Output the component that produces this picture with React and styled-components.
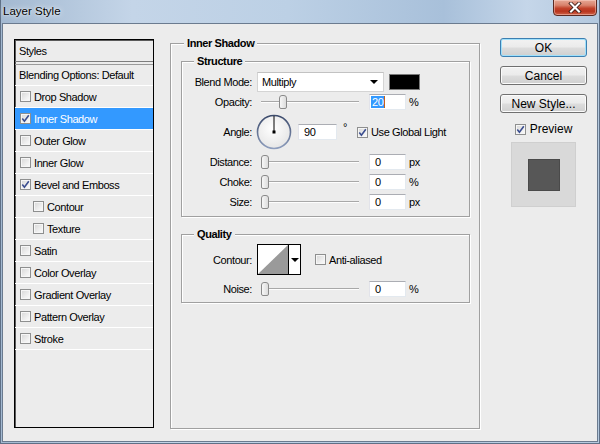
import React from 'react';
import styled, {createGlobalStyle, css} from 'styled-components';

const GlobalStyle = createGlobalStyle`
  html, body {
    margin: 0;
    padding: 0;
    overflow: hidden;
    background: #b9cce1;
  }
  body {
    font-family: "Liberation Sans", Arial, sans-serif;
  }
`;

const layerItems = [
  {label: 'Drop Shadow'},
  {label: 'Inner Shadow', checked: true, selected: true},
  {label: 'Outer Glow'},
  {label: 'Inner Glow'},
  {label: 'Bevel and Emboss', checked: true},
  {label: 'Contour', indent: true},
  {label: 'Texture', indent: true},
  {label: 'Satin'},
  {label: 'Color Overlay'},
  {label: 'Gradient Overlay'},
  {label: 'Pattern Overlay'},
  {label: 'Stroke'},
];

const sliderRows = [
  {label: 'Distance:', value: 0, unit: 'px'},
  {label: 'Choke:', value: 0, unit: '%'},
  {label: 'Size:', value: 0, unit: 'px'},
];

function CheckBox({checked}) {
  return (
    <Check>
      {checked && (
        <svg width="9" height="9" viewBox="0 0 9 9">
          <path d="M1.3 4.6 L3.4 7.2 L7.8 1.2" fill="none" stroke="#3a4d8f" strokeWidth="1.6" />
        </svg>
      )}
    </Check>
  );
}

function Slider({value}) {
  return (
    <Track>
      <Thumb style={{left: 4 + (value / 100) * 90}} />
    </Track>
  );
}

function Dial() {
  return (
    <DialBox>
      <svg width="36" height="36" viewBox="0 0 36 36">
        <defs>
          <linearGradient id="ring" x1="0" y1="0" x2="0" y2="1">
            <stop offset="0" stopColor="#3b4a6b" />
            <stop offset="1" stopColor="#8d9dbd" />
          </linearGradient>
          <radialGradient id="face" cx="0.45" cy="0.4" r="0.6">
            <stop offset="0" stopColor="#ffffff" />
            <stop offset="1" stopColor="#e6e6e6" />
          </radialGradient>
        </defs>
        <circle cx="18" cy="18" r="16.5" fill="url(#face)" stroke="url(#ring)" strokeWidth="1.6" />
        <line x1="18" y1="18" x2="18" y2="2" stroke="#000" strokeWidth="1" />
        <rect x="16.5" y="16.5" width="3" height="3" fill="#000" />
      </svg>
    </DialBox>
  );
}

export default function App() {
  return (
    <>
      <GlobalStyle />
      <Window>
        <TitleBar>
          <Title>Layer Style</Title>
          <CloseButton>
            <svg width="14" height="11" viewBox="0 0 14 11">
              <path d="M3 1.5 L11 9.5 M11 1.5 L3 9.5" stroke="#3b1a14" strokeWidth="3.8" strokeLinecap="square" />
              <path d="M3 1.5 L11 9.5 M11 1.5 L3 9.5" stroke="#fff" strokeWidth="2.1" strokeLinecap="square" />
            </svg>
          </CloseButton>
        </TitleBar>

        <Client>
          <StylesList>
            <ListHeader>Styles</ListHeader>
            <ListRow first>Blending Options: Default</ListRow>
            {layerItems.map(item => (
              <ListRow key={item.label} selected={item.selected} indent={item.indent} check>
                <CheckBox checked={item.checked} />
                <span>{item.label}</span>
              </ListRow>
            ))}
          </StylesList>

          <Panel>
            <Legend inset={3}>Inner Shadow</Legend>

            <Group>
              <Legend inset={12}>Structure</Legend>
              <Row>
                <Label>Blend Mode:</Label>
                <Select>
                  <span>Multiply</span>
                  <Arrow />
                </Select>
                <Swatch />
              </Row>
              <Row>
                <Label>Opacity:</Label>
                <Slider value={20} />
                <Field>
                  <Selected>20</Selected>
                  <Caret />
                </Field>
                <Unit>%</Unit>
              </Row>
              <Row tall>
                <Label>Angle:</Label>
                <Dial />
                <Field w={39}>90</Field>
                <Unit gap={6}>°</Unit>
                <CheckLabel gap={10}>
                  <CheckBox checked />
                  <span>Use Global Light</span>
                </CheckLabel>
              </Row>
              {sliderRows.map((row, i) => (
                <Row key={row.label} space={i === 0 ? 3 : 0}>
                  <Label>{row.label}</Label>
                  <Slider value={row.value} />
                  <Field>{row.value}</Field>
                  <Unit>{row.unit}</Unit>
                </Row>
              ))}
            </Group>

            <Group quality>
              <Legend inset={12}>Quality</Legend>
              <Row h={31}>
                <Label>Contour:</Label>
                <ContourPicker>
                  <svg width="30" height="29" viewBox="0 0 30 29">
                    <rect width="30" height="29" fill="#fff" />
                    <polygon points="0,29 30,0 30,29" fill="#9a9a9a" />
                  </svg>
                  <ContourDrop>
                    <Arrow />
                  </ContourDrop>
                </ContourPicker>
                <CheckLabel gap={14}>
                  <CheckBox />
                  <span>Anti-aliased</span>
                </CheckLabel>
              </Row>
              <Row space={4}>
                <Label>Noise:</Label>
                <Slider value={0} />
                <Field>0</Field>
                <Unit>%</Unit>
              </Row>
            </Group>
          </Panel>

          <Side>
            <Button primary>OK</Button>
            <Button>Cancel</Button>
            <Button>New Style...</Button>
            <PreviewToggle>
              <CheckBox checked />
              <span>Preview</span>
            </PreviewToggle>
            <PreviewBox>
              <PreviewSwatch />
            </PreviewBox>
          </Side>
        </Client>
      </Window>
    </>
  );
}

const Window = styled.div`
  box-sizing: border-box;
  width: 600px;
  height: 444px;
  display: flex;
  flex-direction: column;
  border: 1px solid #5f7086;
  border-top: none;
  background: linear-gradient(90deg, #a3b9d1 0%, #c4d5e8 22%, #bcd0e5 48%, #a8c0da 74%, #c5d6e9 88%, #b3c8de 100%);
`;

const TitleBar = styled.div`
  height: 23px;
  display: flex;
  justify-content: space-between;
  align-items: flex-start;
  padding-left: 2px;
  flex: none;
`;

const Title = styled.span`
  padding-top: 4px;
  font-size: 11.5px;
  line-height: 14px;
  color: #000;
  text-shadow: 0 0 6px rgba(255, 255, 255, 0.9), 0 0 2px rgba(255, 255, 255, 0.8);
`;

const CloseButton = styled.div`
  box-sizing: border-box;
  width: 44px;
  height: 17px;
  margin-top: -1px;
  margin-right: 2px;
  display: flex;
  align-items: center;
  justify-content: center;
  border: 1px solid #5b2a22;
  border-radius: 0 0 4px 4px;
  background: linear-gradient(#e6a895 0%, #d8826c 35%, #c2432b 55%, #b8351e 75%, #d0644a 100%);
  box-shadow: inset 0 0 0 1px rgba(255, 220, 210, 0.45);
`;

const Client = styled.div`
  flex: 1;
  display: flex;
  align-items: stretch;
  margin: 0 1px 1px 1px;
  padding: 12px 0 12px 11px;
  border: 1px solid #6b7b8f;
  background: #ececec;
  font-size: 11px;
  letter-spacing: -0.4px;
  color: #000;
`;

const StylesList = styled.div`
  box-sizing: border-box;
  width: 140px;
  margin: 3px 0 1px 0;
  flex: none;
  display: flex;
  flex-direction: column;
  border: 1px solid #000;
  box-shadow: inset 1px 1px 0 #5a5a5a;
  background: #ececec;
`;

const ListHeader = styled.div`
  box-sizing: border-box;
  height: 22px;
  display: flex;
  align-items: center;
  padding-left: 4px;
  border-bottom: 1px solid #7d7d7d;
  margin-bottom: 2px;
`;

const ListRow = styled.div`
  box-sizing: border-box;
  height: 22px;
  flex: none;
  display: flex;
  align-items: center;
  gap: 3px;
  padding-left: ${p => (p.check ? (p.indent ? 18 : 5) : 4)}px;
  border-bottom: 1px solid #fff;
  ${p =>
    p.first &&
    css`
      border-top: 1px solid #9a9a9a;
    `}
  ${p =>
    p.selected &&
    css`
      background: #3399ff;
      color: #fff;
    `}
`;

const Check = styled.span`
  box-sizing: border-box;
  width: 11px;
  height: 11px;
  flex: none;
  display: flex;
  align-items: center;
  justify-content: center;
  border: 1px solid #8e8f8f;
  background: linear-gradient(135deg, #d6d6d6 0%, #f2f2f2 70%, #fbfbfb 100%);
  box-shadow: inset 0 0 0 1px #f6f6f6;
`;

const Panel = styled.fieldset`
  box-sizing: border-box;
  width: 310px;
  margin: 0 0 0 16px;
  padding: 4px 9px 0 10px;
  min-width: 0;
  border: 1px solid #a0a0a0;
  box-shadow: inset 1px 1px 0 #fff, 1px 1px 0 #fff;
`;

const Legend = styled.legend`
  margin-left: ${p => p.inset}px;
  padding: 0 3px;
  font-weight: bold;
  line-height: 14px;
  background: #ececec;
`;

const Group = styled.fieldset`
  margin: ${p => (p.quality ? 10 : 0)}px 0 0 0;
  padding: ${p => (p.quality ? '3px 0 3px' : '4px 0 4px')};
  min-width: 0;
  border: 1px solid #a0a0a0;
  box-shadow: inset 1px 1px 0 #fff, 1px 1px 0 #fff;
`;

const Row = styled.div`
  display: flex;
  align-items: center;
  height: ${p => (p.tall ? 34 : p.h || 20)}px;
  margin-top: ${p => (p.tall ? 3 : p.space || 0)}px;
`;

const Label = styled.span`
  width: 70px;
  flex: none;
  text-align: right;
`;

const Select = styled.div`
  box-sizing: border-box;
  width: 127px;
  height: 20px;
  margin-left: 5px;
  display: flex;
  align-items: center;
  justify-content: space-between;
  padding: 0 5px 0 4px;
  background: #fff;
  border: 1px solid #d4d4d4;
  border-top-color: #c2c2c2;
`;

const Arrow = styled.span`
  width: 0;
  height: 0;
  border-left: 4px solid transparent;
  border-right: 4px solid transparent;
  border-top: 4px solid #000;
`;

const Swatch = styled.div`
  box-sizing: border-box;
  width: 31px;
  height: 16px;
  margin-left: 5px;
  background: #000;
  border: 1px solid #7a7a7a;
`;

const Track = styled.div`
  position: relative;
  width: 106px;
  height: 16px;
  margin-left: 5px;
  flex: none;
  &::before {
    content: '';
    position: absolute;
    left: 4px;
    right: 4px;
    top: 7px;
    height: 1px;
    background: #a8a8a8;
    border-bottom: 1px solid #fdfdfd;
  }
`;

const Thumb = styled.span`
  position: absolute;
  top: 1px;
  box-sizing: border-box;
  width: 8px;
  height: 14px;
  border: 1px solid #8a8a8a;
  border-radius: 3px 3px 2px 2px;
  background: linear-gradient(90deg, #f7f7f7, #dcdcdc);
`;

const Field = styled.div`
  box-sizing: border-box;
  width: ${p => p.w || 37}px;
  height: 16px;
  margin-left: 6px;
  padding-left: 5px;
  display: flex;
  align-items: center;
  flex: none;
  background: #fff;
  border: 1px solid #e3e9ef;
  border-top-color: #abadb3;
  border-left-color: #e2e3ea;
`;

const Selected = styled.span`
  margin-left: -4px;
  padding: 0 1px;
  line-height: 12px;
  background: #3399ff;
  color: #fff;
`;

const Caret = styled.span`
  width: 1px;
  height: 12px;
  background: #c4601a;
`;

const Unit = styled.span`
  margin-left: ${p => p.gap || 3}px;
  align-self: ${p => (p.gap ? 'flex-start' : 'center')};
  margin-top: ${p => (p.gap ? 6 : 0)}px;
`;

const DialBox = styled.div`
  width: 36px;
  height: 36px;
  margin-left: 4px;
  flex: none;
`;

const CheckLabel = styled.label`
  display: flex;
  align-items: center;
  gap: 3px;
  margin-left: ${p => p.gap}px;
  white-space: nowrap;
`;

const ContourPicker = styled.div`
  box-sizing: border-box;
  height: 31px;
  margin-left: 5px;
  display: flex;
  border: 1px solid #000;
  background: #fff;
`;

const ContourDrop = styled.div`
  width: 11px;
  display: flex;
  align-items: center;
  justify-content: center;
  border-left: 1px solid #000;
`;

const Side = styled.div`
  width: 87px;
  margin-left: 20px;
  padding-top: 2px;
  flex: none;
  display: flex;
  flex-direction: column;
  align-items: stretch;
  gap: 9px;
`;

const Button = styled.div`
  box-sizing: border-box;
  height: 19px;
  display: flex;
  align-items: center;
  justify-content: center;
  font-size: 12px;
  letter-spacing: 0;
  border: 1px solid #707070;
  border-radius: 3px;
  background: linear-gradient(#f2f2f2 0%, #ebebeb 48%, #dddddd 52%, #cfcfcf 100%);
  box-shadow: inset 0 0 0 1px #fbfbfb;
  ${p =>
    p.primary &&
    css`
      border-color: #3c7fb1;
      box-shadow: inset 0 0 0 1px #9fe0fb;
    `}
`;

const PreviewToggle = styled.label`
  height: 14px;
  display: flex;
  align-items: center;
  justify-content: center;
  gap: 4px;
  font-size: 12px;
  letter-spacing: 0;
`;

const PreviewBox = styled.div`
  box-sizing: border-box;
  width: 65px;
  height: 65px;
  margin-top: -3px;
  align-self: center;
  display: flex;
  align-items: center;
  justify-content: center;
  background: #d9d9d9;
  border: 1px solid #cfcfcf;
`;

const PreviewSwatch = styled.div`
  box-sizing: border-box;
  width: 32px;
  height: 32px;
  background: #575757;
  border: 1px solid #4a4a4a;
`;
